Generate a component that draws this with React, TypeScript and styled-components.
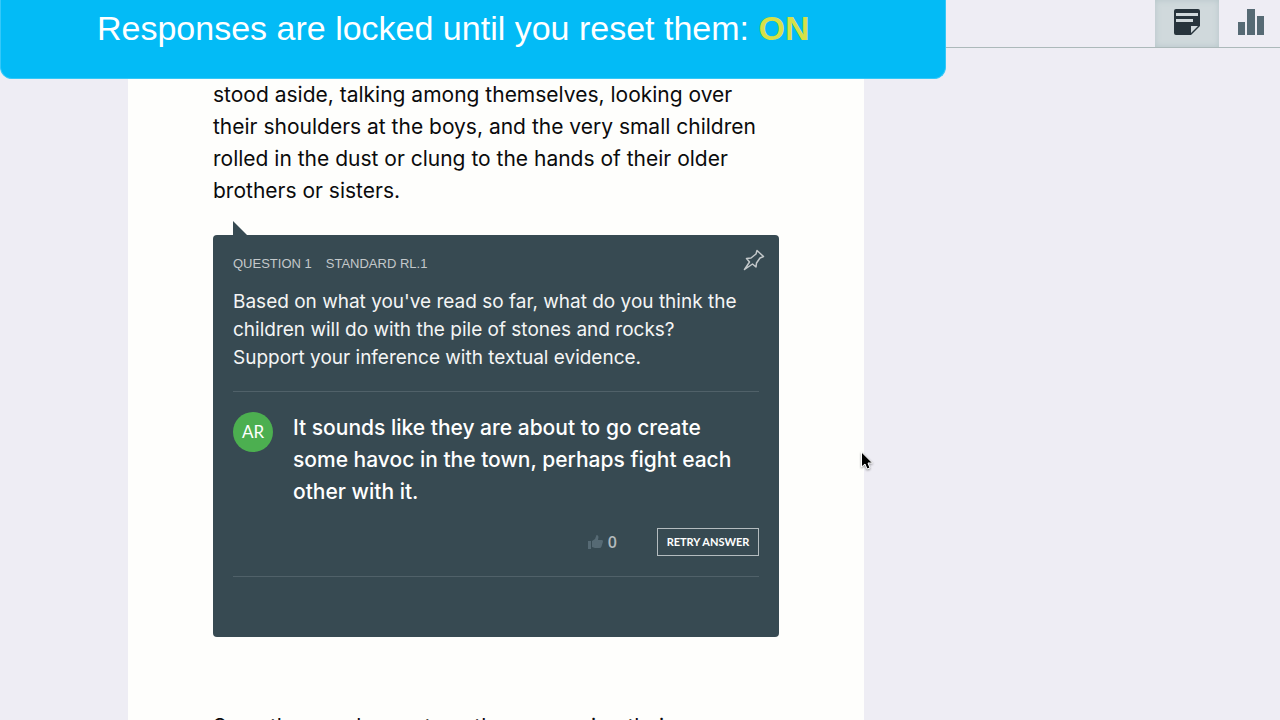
import React from "react";
import styled, { createGlobalStyle } from "styled-components";

const GlobalStyle = createGlobalStyle`
  * { box-sizing: border-box; }
  body { margin: 0; background: #eeedf4; font-family: Inter, "Liberation Sans", sans-serif; }
  p { margin: 0; }
`;

const Page = styled.div`
  height: 100vh;
  display: flex;
  flex-direction: column;
  overflow: hidden;
`;

const Toolbar = styled.header`
  display: flex;
  flex: none;
  justify-content: flex-end;
  height: 48px;
  border-bottom: 1px solid #acb9ba;
`;

const ToolButton = styled.button<{ $active?: boolean }>`
  display: flex;
  align-items: flex-start;
  justify-content: center;
  width: 64px;
  padding: 9px 0 0;
  border: 0;
  background: ${(p) => (p.$active ? "#d0d9dc" : "transparent")};
  box-shadow: ${(p) => (p.$active ? "inset 0 0 6px #b5c5c9" : "none")};

  &:last-child { margin-right: -3px; }
`;

const Banner = styled.div`
  position: absolute;
  top: 0;
  left: 0;
  width: 946px;
  max-width: 100%;
  height: 79px;
  padding: 8px 96px 0;
  border: 1px solid #35c8f8;
  border-top: 0;
  border-radius: 0 0 12px 12px;
  background: #03bbf6;
  color: #fff;
  font-family: "Liberation Sans", Arial, sans-serif;
  font-size: 34px;
  line-height: 40px;
  white-space: nowrap;

  strong { color: #d6e048; }
`;

const Article = styled.main`
  flex: 1 0 auto;
  width: 57.5%;
  margin-left: 10%;
  padding: 31px 85px 0;
  background: #fefefc;
`;

const Passage = styled.p`
  color: #0b0b0c;
  font-size: 21px;
  line-height: 32px;
  white-space: nowrap;
`;

const Card = styled.section`
  position: relative;
  margin: 28px 0 74px;
  padding: 19px 20px 60px;
  border-radius: 4px;
  background: #374a52;
  color: #fff;

  &::before {
    content: "";
    position: absolute;
    top: -14px;
    left: 20px;
    width: 14px;
    height: 14px;
    background: #374a52;
    clip-path: polygon(0 0, 100% 100%, 0 100%);
  }
`;

const CardHead = styled.header`
  display: flex;
  align-items: center;
  gap: 14px;
  height: 20px;
  margin-bottom: 14px;
  color: #c3c8ca;
  font-family: "Liberation Sans", Arial, sans-serif;
  font-size: 13px;
  line-height: 20px;
`;

const PinButton = styled.button`
  display: flex;
  margin: 0 -6px 0 auto;
  padding: 0 0 8px;
  border: 0;
  background: none;
  color: #c3c8ca;
`;

const Question = styled.p`
  padding-bottom: 19px;
  border-bottom: 1px solid #506169;
  color: #f4f5f5;
  font-size: 19px;
  line-height: 28px;
  white-space: nowrap;
`;

const Response = styled.div`
  display: flex;
  gap: 20px;
  padding-top: 20px;
`;

const Avatar = styled.div`
  flex: none;
  width: 40px;
  height: 40px;
  border-radius: 50%;
  background: #4caf50;
  font-family: Lato, sans-serif;
  font-size: 17px;
  line-height: 40px;
  text-align: center;
`;

const Answer = styled.p`
  font-size: 21px;
  font-weight: 550;
  line-height: 32px;
  white-space: nowrap;
`;

const Actions = styled.footer`
  display: flex;
  align-items: center;
  justify-content: flex-end;
  gap: 40px;
  padding: 20px 0;
  border-bottom: 1px solid #506169;
`;

const LikeButton = styled.button`
  display: flex;
  align-items: center;
  gap: 5px;
  padding: 0;
  border: 0;
  background: none;
  color: #b3babd;
  font-family: "Open Sans", sans-serif;
  font-size: 16px;
  font-weight: 600;
  line-height: 28px;
`;

const RetryButton = styled.button`
  width: 102px;
  height: 28px;
  padding: 0 0 2px;
  border: 1px solid #b4bcbf;
  background: none;
  color: #fff;
  font-family: Lato, sans-serif;
  font-size: 11px;
  font-weight: 700;
`;

const Cursor = styled.svg`
  position: absolute;
  top: 451px;
  left: 860px;
  filter: drop-shadow(0 1px 1px #0006);
`;

export default function App() {
  return (
    <Page>
      <GlobalStyle />
      <Toolbar>
        <ToolButton $active aria-label="Notes">
          <svg width="26" height="26" viewBox="0 0 26 26">
            <path fillRule="evenodd" fill="#27343c" d="M2 0h22q2 0 2 2v15l-9 9H2q-2 0-2-2V2q0-2 2-2zM2 4v3h22V4zM2 10v3h17v-3zM17 17v7l7-7z" />
          </svg>
        </ToolButton>
        <ToolButton aria-label="Statistics">
          <svg width="26" height="26" viewBox="0 0 26 26">
            <path fill="#566a74" d="M0 13h7v13H0zM9 0h8v26H9zM19 7h7v19h-7z" />
          </svg>
        </ToolButton>
      </Toolbar>
      <Article>
        <Passage>
          stood aside, talking among themselves, looking over<br />
          their shoulders at the boys, and the very small children<br />
          rolled in the dust or clung to the hands of their older<br />
          brothers or sisters.
        </Passage>
        <Card>
          <CardHead>
            <span>QUESTION 1</span>
            <span>STANDARD RL.1</span>
            <PinButton aria-label="Pin question">
              <svg width="22" height="22" viewBox="0 0 22 22" fill="none" stroke="currentColor" strokeWidth="1.5" strokeLinejoin="round">
                <path d="M14 1.5l6.5 6-3.5 1.5-3.5 5-.5 4-3.5-3L1.5 20.5 6.5 13 3.5 9.500l4.500-.5 5-4z" />
              </svg>
            </PinButton>
          </CardHead>
          <Question>
            Based on what you've read so far, what do you think the<br />
            children will do with the pile of stones and rocks?<br />
            Support your inference with textual evidence.
          </Question>
          <Response>
            <Avatar>AR</Avatar>
            <Answer>
              It sounds like they are about to go create<br />
              some havoc in the town, perhaps fight each<br />
              other with it.
            </Answer>
          </Response>
          <Actions>
            <LikeButton aria-label="Like, 0 likes">
              <svg width="15" height="14" viewBox="0 0 15 14" fill="#566a74">
                <path d="M0 6h3v8H0zM4 6l3-2 1.500-4q2 0 2 2l-.5 3h4q1 0 1 1.500l-1.500 5q-.5 1.500-2 1.500H7l-3-1z" />
              </svg>
              <span>0</span>
            </LikeButton>
            <RetryButton>RETRY ANSWER</RetryButton>
          </Actions>
        </Card>
        <Passage>Soon the men began to gather, surveying their</Passage>
      </Article>
      <Banner role="status">
        Responses are locked until you reset them: <strong>ON</strong>
      </Banner>
      <Cursor width="14" height="20" viewBox="0 0 14 20" aria-hidden="true">
        <path d="M1.500 1v15l3.500-3 2 5 3-1-2-5h4.500z" fill="#000" stroke="#fff" strokeWidth="1" />
      </Cursor>
    </Page>
  );
}
